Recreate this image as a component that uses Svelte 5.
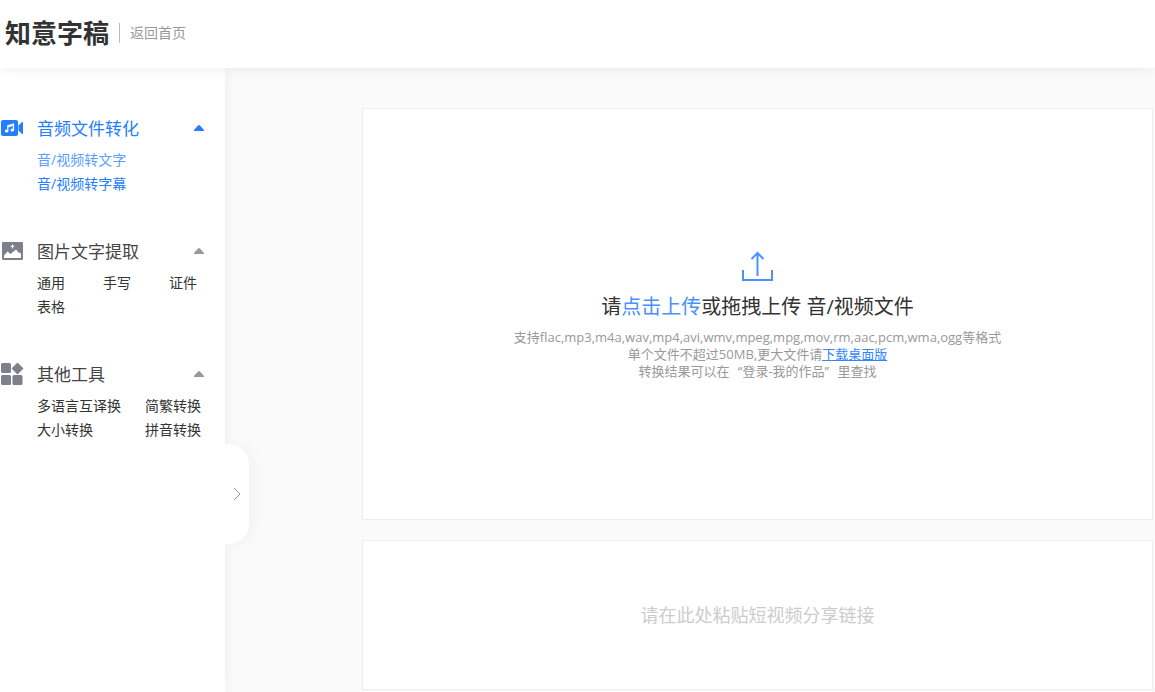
<script lang="ts">
  const groups = [
    {
      title: '音频文件转化',
      icon: 'video',
      layout: 'one',
      active: true,
      items: ['音/视频转文字', '音/视频转字幕'],
    },
    {
      title: '图片文字提取',
      icon: 'image',
      layout: 'three',
      active: false,
      items: ['通用', '手写', '证件', '表格'],
    },
    {
      title: '其他工具',
      icon: 'tools',
      layout: 'two',
      active: false,
      items: ['多语言互译换', '简繁转换', '大小转换', '拼音转换'],
    },
  ];

  let opened = $state([true, true, true]);
  let current = $state('音/视频转文字');
  let link = $state('');
  let fileInput: HTMLInputElement;
</script>

<header class="header">
  <h1 class="logo">知意字稿</h1>
  <a class="back" href="#home">返回首页</a>
</header>

<div class="layout">
  <aside class="sidebar">
    <nav>
      {#each groups as group, i}
        <section class="group" class:active={group.active}>
          <button class="group-head" aria-expanded={opened[i]} onclick={() => (opened[i] = !opened[i])}>
            <svg class="group-icon" viewBox="0 0 24 24" aria-hidden="true">
              {#if group.icon === 'video'}
                <rect x="1" y="4" width="17" height="16" rx="2" />
                <path d="M18.5 9.5L22 6q1-.7 1 .5v11q0 1.2-1 .5l-3.500-3.500z" />
                <path class="note" d="M7.800 15V9.600l5.700-1.500v5.700M7.800 11l5.700-1.500" />
                <ellipse class="dot" cx="6.600" cy="15" rx="1.800" ry="1.600" />
                <ellipse class="dot" cx="12.300" cy="14" rx="1.800" ry="1.600" />
              {:else if group.icon === 'image'}
                <rect x="2" y="3" width="21" height="18" rx="1" />
                <path class="dot" d="M4 19v-2.500l3.500-4 3 2.500 5.500-4.500 3 3.500 1-.5 1 1.500v4zM12.500 5l.8 1.700 1.500.6-1.500.7-.8 2-.8-2-1.500-.7 1.500-.6z" />
              {:else}
                <rect x="1" y="1" width="10" height="10" rx="1.500" />
                <rect x="1" y="13" width="10" height="10" rx="1.500" />
                <rect x="12.500" y="13" width="10" height="10" rx="1.500" />
                <path d="M17 1q.5-.5 1 0l5 5q.5.5 0 1l-5 5q-.5.5-1 0l-5-5q-.5-.5 0-1z" />
              {/if}
            </svg>
            <span class="group-title">{group.title}</span>
            <svg class="caret" class:closed={!opened[i]} viewBox="0 0 12 8" aria-hidden="true">
              <path d="M1 6l4-4.500q1-1 2 0L11 6q.5 1-.5 1h-9Q.5 7 1 6z" />
            </svg>
          </button>
          {#if opened[i]}
            <ul class="items {group.layout}">
              {#each group.items as item}
                <li>
                  <a href="#tool" class:current={item === current} onclick={() => (current = item)}>{item}</a>
                </li>
              {/each}
            </ul>
          {/if}
        </section>
      {/each}
    </nav>
    <button class="toggle" aria-label="展开">
      <svg viewBox="0 0 8 14" aria-hidden="true"><path d="M1 1l6 6-6 6" /></svg>
    </button>
  </aside>

  <main class="content">
    <section class="panel upload">
      <svg class="upload-icon" viewBox="0 0 32 32" aria-hidden="true">
        <path d="M1 19v10h29V19M15.500 25V2M9.500 8l6-6 6 6" />
      </svg>
      <p class="upload-title">请<button class="pick" onclick={() => fileInput.click()}>点击上传</button>或拖拽上传 音/视频文件</p>
      <input bind:this={fileInput} type="file" aria-label="音/视频文件" hidden />
      <p class="hint">支持flac,mp3,m4a,wav,mp4,avi,wmv,mpeg,mpg,mov,rm,aac,pcm,wma,ogg等格式</p>
      <p class="hint">单个文件不超过50MB,更大文件请<a href="#download">下载桌面版</a></p>
      <p class="hint">转换结果可以在<span class="quote">“</span>登录-我的作品<span class="quote end">”</span>里查找</p>
    </section>
    <section class="panel">
      <input class="link-input" type="text" aria-label="短视频分享链接" placeholder="请在此处粘贴短视频分享链接" bind:value={link} />
    </section>
  </main>
</div>

<style>
  :global(body) {
    margin: 0;
    background: #fafafa;
    color: #333;
    font-family: 'Open Sans', 'Noto Sans CJK SC', sans-serif;
    font-size: 14px;
  }

  button,
  input {
    font-family: inherit;
    border: 0;
    padding: 0;
    background: none;
  }

  button {
    cursor: pointer;
  }

  h1,
  p,
  ul {
    margin: 0;
    padding: 0;
  }

  .header {
    position: relative;
    z-index: 2;
    display: flex;
    align-items: center;
    height: 68px;
    padding: 0 0 2px 5px;
    background: #fff;
    box-shadow: 0 0 12px rgba(0, 0, 0, 0.08);
    box-sizing: border-box;
  }

  .logo {
    font-size: 26px;
    line-height: 36px;
    font-weight: 700;
  }

  .back {
    margin-left: 10px;
    padding-left: 10px;
    border-left: 1px solid #bbb;
    color: #999;
    line-height: 20px;
    text-decoration: none;
  }

  .layout {
    display: flex;
    min-height: calc(100vh - 68px);
  }

  .sidebar {
    position: relative;
    flex: 0 0 225px;
    padding-top: 40px;
    background: #fff;
    box-shadow: 0 0 12px rgba(0, 0, 0, 0.06);
    box-sizing: border-box;
  }

  .group {
    margin-bottom: 35px;
  }

  .group-head {
    display: flex;
    align-items: center;
    width: 100%;
    height: 40px;
    padding-right: 20px;
    color: #444;
    font-size: 17px;
  }

  .group-icon {
    width: 24px;
    height: 24px;
    margin-right: 13px;
    fill: #7f7f8c;
  }

  .group-icon .dot {
    fill: #fff;
  }

  .group-icon .note {
    fill: none;
    stroke: #fff;
    stroke-width: 1.2;
  }

  .group-title {
    flex: 1;
    padding-bottom: 2px;
    text-align: left;
  }

  .caret {
    width: 12px;
    height: 8px;
    fill: #999;
  }

  .caret.closed {
    transform: rotate(180deg);
  }

  .items {
    display: grid;
    padding-left: 37px;
    list-style: none;
    line-height: 24px;
    white-space: nowrap;
  }

  .two {
    grid-template-columns: 108px 1fr;
  }

  .three {
    grid-template-columns: 66px 66px 1fr;
  }

  .items a {
    color: #333;
    text-decoration: none;
  }

  .active .group-head,
  .active .items a {
    color: #257dff;
  }

  .active .items a.current {
    color: #5c9eff;
  }

  .active .group-icon,
  .active .caret {
    fill: #257dff;
  }

  .toggle {
    position: absolute;
    top: 376px;
    left: 100%;
    display: flex;
    align-items: center;
    justify-content: center;
    width: 24px;
    height: 100px;
    border-radius: 0 20px 20px 0;
    background: #fff;
    box-shadow: 6px 0 12px rgba(0, 0, 0, 0.03);
  }

  .toggle svg {
    width: 8px;
    height: 14px;
    fill: none;
    stroke: #999;
  }

  .content {
    flex: 1;
    display: flex;
    flex-direction: column;
    gap: 20px;
    padding: 40px 2px 2px 137px;
  }

  .panel {
    border: 1px solid #eee;
    background: #fff;
  }

  .upload {
    display: flex;
    flex-direction: column;
    align-items: center;
    padding: 142px 20px 139px;
  }

  .upload-icon {
    width: 32px;
    height: 32px;
    margin-bottom: 8px;
    fill: none;
    stroke: #4a93ff;
    stroke-width: 2;
  }

  .upload-title {
    margin-bottom: 6px;
    font-size: 20px;
    line-height: 32px;
  }

  .pick {
    color: #4a8fff;
    font-size: 20px;
  }

  .hint {
    color: #999;
    font-size: 13px;
    line-height: 17px;
  }

  .hint a {
    color: #3385ff;
  }

  .quote {
    display: inline-block;
    width: 13px;
    text-align: right;
  }

  .quote.end {
    text-align: left;
  }

  .link-input {
    display: block;
    width: 100%;
    height: 148px;
    color: #333;
    font-size: 18px;
    text-align: center;
    outline: none;
  }

  .link-input::placeholder {
    color: #ccc;
    opacity: 1;
  }
</style>
